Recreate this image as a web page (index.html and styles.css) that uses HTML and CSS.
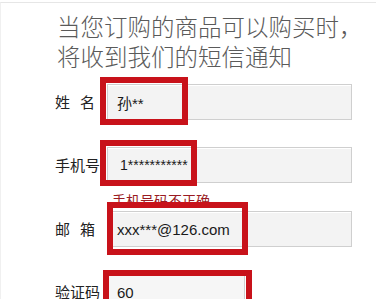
FILE: index.html
```html
<!DOCTYPE html>
<html lang="zh">
<head>
<meta charset="utf-8">
<link rel="stylesheet" href="styles.css">
</head>
<body>
<div class="page">
  <div class="title">当您订购的商品可以购买时，<br>将收到我们的短信通知</div>
  <div class="form">
    <div class="row">
      <span class="label">姓&nbsp;&nbsp;&nbsp;名</span>
      <div class="input">孙**</div>
    </div>
    <div class="row">
      <span class="label">手机号</span>
      <div class="input phone">1***********</div>
    </div>
    <div class="error">手机号码不正确</div>
    <div class="row">
      <span class="label">邮&nbsp;&nbsp;&nbsp;箱</span>
      <div class="input">xxx***@126.com</div>
    </div>
    <div class="row">
      <span class="label">验证码</span>
      <div class="input short">60</div>
    </div>
  </div>
  <div class="mark m1"></div>
  <div class="mark m2"></div>
  <div class="mark m3"></div>
  <div class="mark m4"></div>
</div>
</body>
</html>
```
FILE: styles.css
```css
html, body {
  margin: 0;
  padding: 0;
  background: #ffffff;
}
body {
  width: 376px;
  height: 299px;
  overflow: hidden;
  font-family: "Liberation Sans", "Noto Sans CJK SC", sans-serif;
}
.page {
  position: relative;
  height: 297px;
  margin-top: 2px;
  border-top: 1px solid #e6e6e6;
  border-left: 1px solid #f0f0f0;
  overflow: hidden;
}
.title {
  margin: 8px 0 0 56px;
  font-family: "Noto Sans CJK SC", sans-serif;
  font-size: 23.5px;
  line-height: 30px;
  color: #5a5a5a;
  font-weight: 300;
  white-space: nowrap;
}
.form {
  margin-top: 13px;
  padding-left: 54px;
}
.row {
  display: flex;
  align-items: center;
  height: 36px;
  margin-bottom: 27px;
}
.label {
  width: 52px;
  font-family: "Noto Sans CJK SC", sans-serif;
  font-size: 15px;
  line-height: 18px;
  color: #222;
  white-space: pre;
}
.input {
  box-sizing: border-box;
  width: 245px;
  height: 36px;
  border: 1px solid #cfcfcf;
  background: #f3f3f3;
  box-shadow: inset 0 1px 0 #ffffff;
  padding-left: 9px;
  display: flex;
  align-items: center;
  font-size: 15px;
  color: #1a1a1a;
}
.input.phone {
  padding-left: 12px;
  font-size: 14px;
}
.input.short {
  width: 138px;
  background: #f6f6f6;
}
.error {
  margin: -19px 0 2px 57px;
  height: 18px;
  font-family: "Noto Sans CJK SC", sans-serif;
  font-size: 14px;
  line-height: 18px;
  color: #9a1a22;
}
.mark {
  position: absolute;
  box-sizing: border-box;
  border: 6px solid #c8121a;
}
.m1 { left: 99px; top: 74px; width: 88px; height: 48px; }
.m2 { left: 99px; top: 137px; width: 97px; height: 46px; }
.m3 { left: 106px; top: 199px; width: 141px; height: 53px; }
.m4 { left: 102px; top: 267px; width: 149px; height: 50px; }
```
